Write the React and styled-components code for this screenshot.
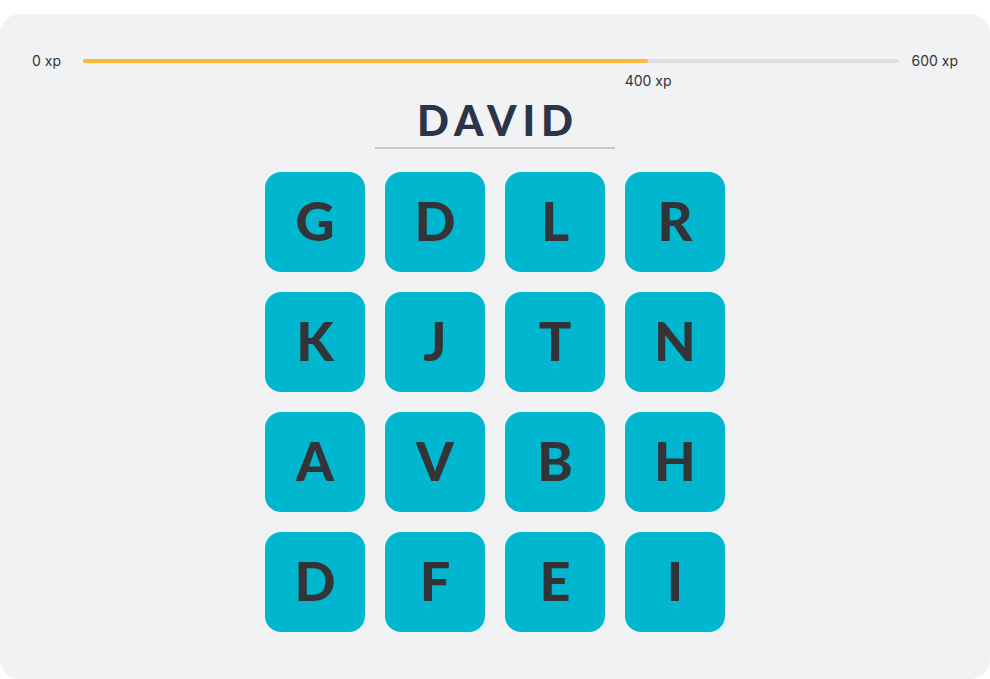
import styled, { createGlobalStyle } from 'styled-components';

const GlobalStyle = createGlobalStyle`
  body {
    margin: 0;
    background: #ffffff;
    font-family: Inter, "Liberation Sans", sans-serif;
  }
`;

const Card = styled.div`
  margin-top: 14px;
  width: 990px;
  height: 665px;
  box-sizing: border-box;
  background: #f1f2f4;
  border-radius: 20px;
  padding: 37px 32px 0 32px;
  display: flex;
  flex-direction: column;
  align-items: center;
`;

const XpRow = styled.div`
  width: 100%;
  display: flex;
  align-items: center;
  font-size: 14px;
  color: #333333;
`;

const XpLabel = styled.span`
  flex: none;
  line-height: 20px;
`;

const Track = styled.div`
  position: relative;
  flex: 1;
  height: 4px;
  border-radius: 2px;
  background: #dcdddf;
  margin: 0 13px 0 22px;
`;

const Fill = styled.div`
  height: 100%;
  border-radius: 2px;
  background: #ffb938;
`;

const Marker = styled.span`
  position: absolute;
  top: 13px;
  transform: translateX(-50%);
  font-size: 14px;
  color: #333333;
  white-space: nowrap;
`;

const Name = styled.h1`
  margin: 25px 0 0;
  width: 240px;
  box-sizing: border-box;
  padding: 0 0 3px 6px;
  text-align: center;
  font-family: Lato, "Open Sans", sans-serif;
  font-weight: 900;
  font-size: 42px;
  line-height: 48px;
  letter-spacing: 6px;
  color: #2c3448;
  border-bottom: 2px solid #c8c9cc;
`;

const Grid = styled.div`
  margin-top: 23px;
  display: grid;
  grid-template-columns: repeat(4, 100px);
  grid-auto-rows: 100px;
  gap: 20px;
`;

const Tile = styled.div`
  background: #00b7cf;
  border-radius: 16px;
  display: flex;
  align-items: center;
  justify-content: center;
  padding-bottom: 4px;
  box-sizing: border-box;
  font-family: Lato, "Open Sans", sans-serif;
  font-weight: 900;
  font-size: 54px;
  color: #333438;
`;

const letters = 'GDLRKJTNAVBHDFEI'.split('');

const App = () => {
  const progress = 0.693;
  return (
    <>
      <GlobalStyle />
      <Card>
        <XpRow>
          <XpLabel>0 xp</XpLabel>
          <Track>
            <Fill style={{ width: `${progress * 100}%` }} />
            <Marker style={{ left: `${progress * 100}%` }}>400 xp</Marker>
          </Track>
          <XpLabel>600 xp</XpLabel>
        </XpRow>
        <Name>DAVID</Name>
        <Grid>
          {letters.map((l, i) => (
            <Tile key={i}>{l}</Tile>
          ))}
        </Grid>
      </Card>
    </>
  );
};

export default App;
